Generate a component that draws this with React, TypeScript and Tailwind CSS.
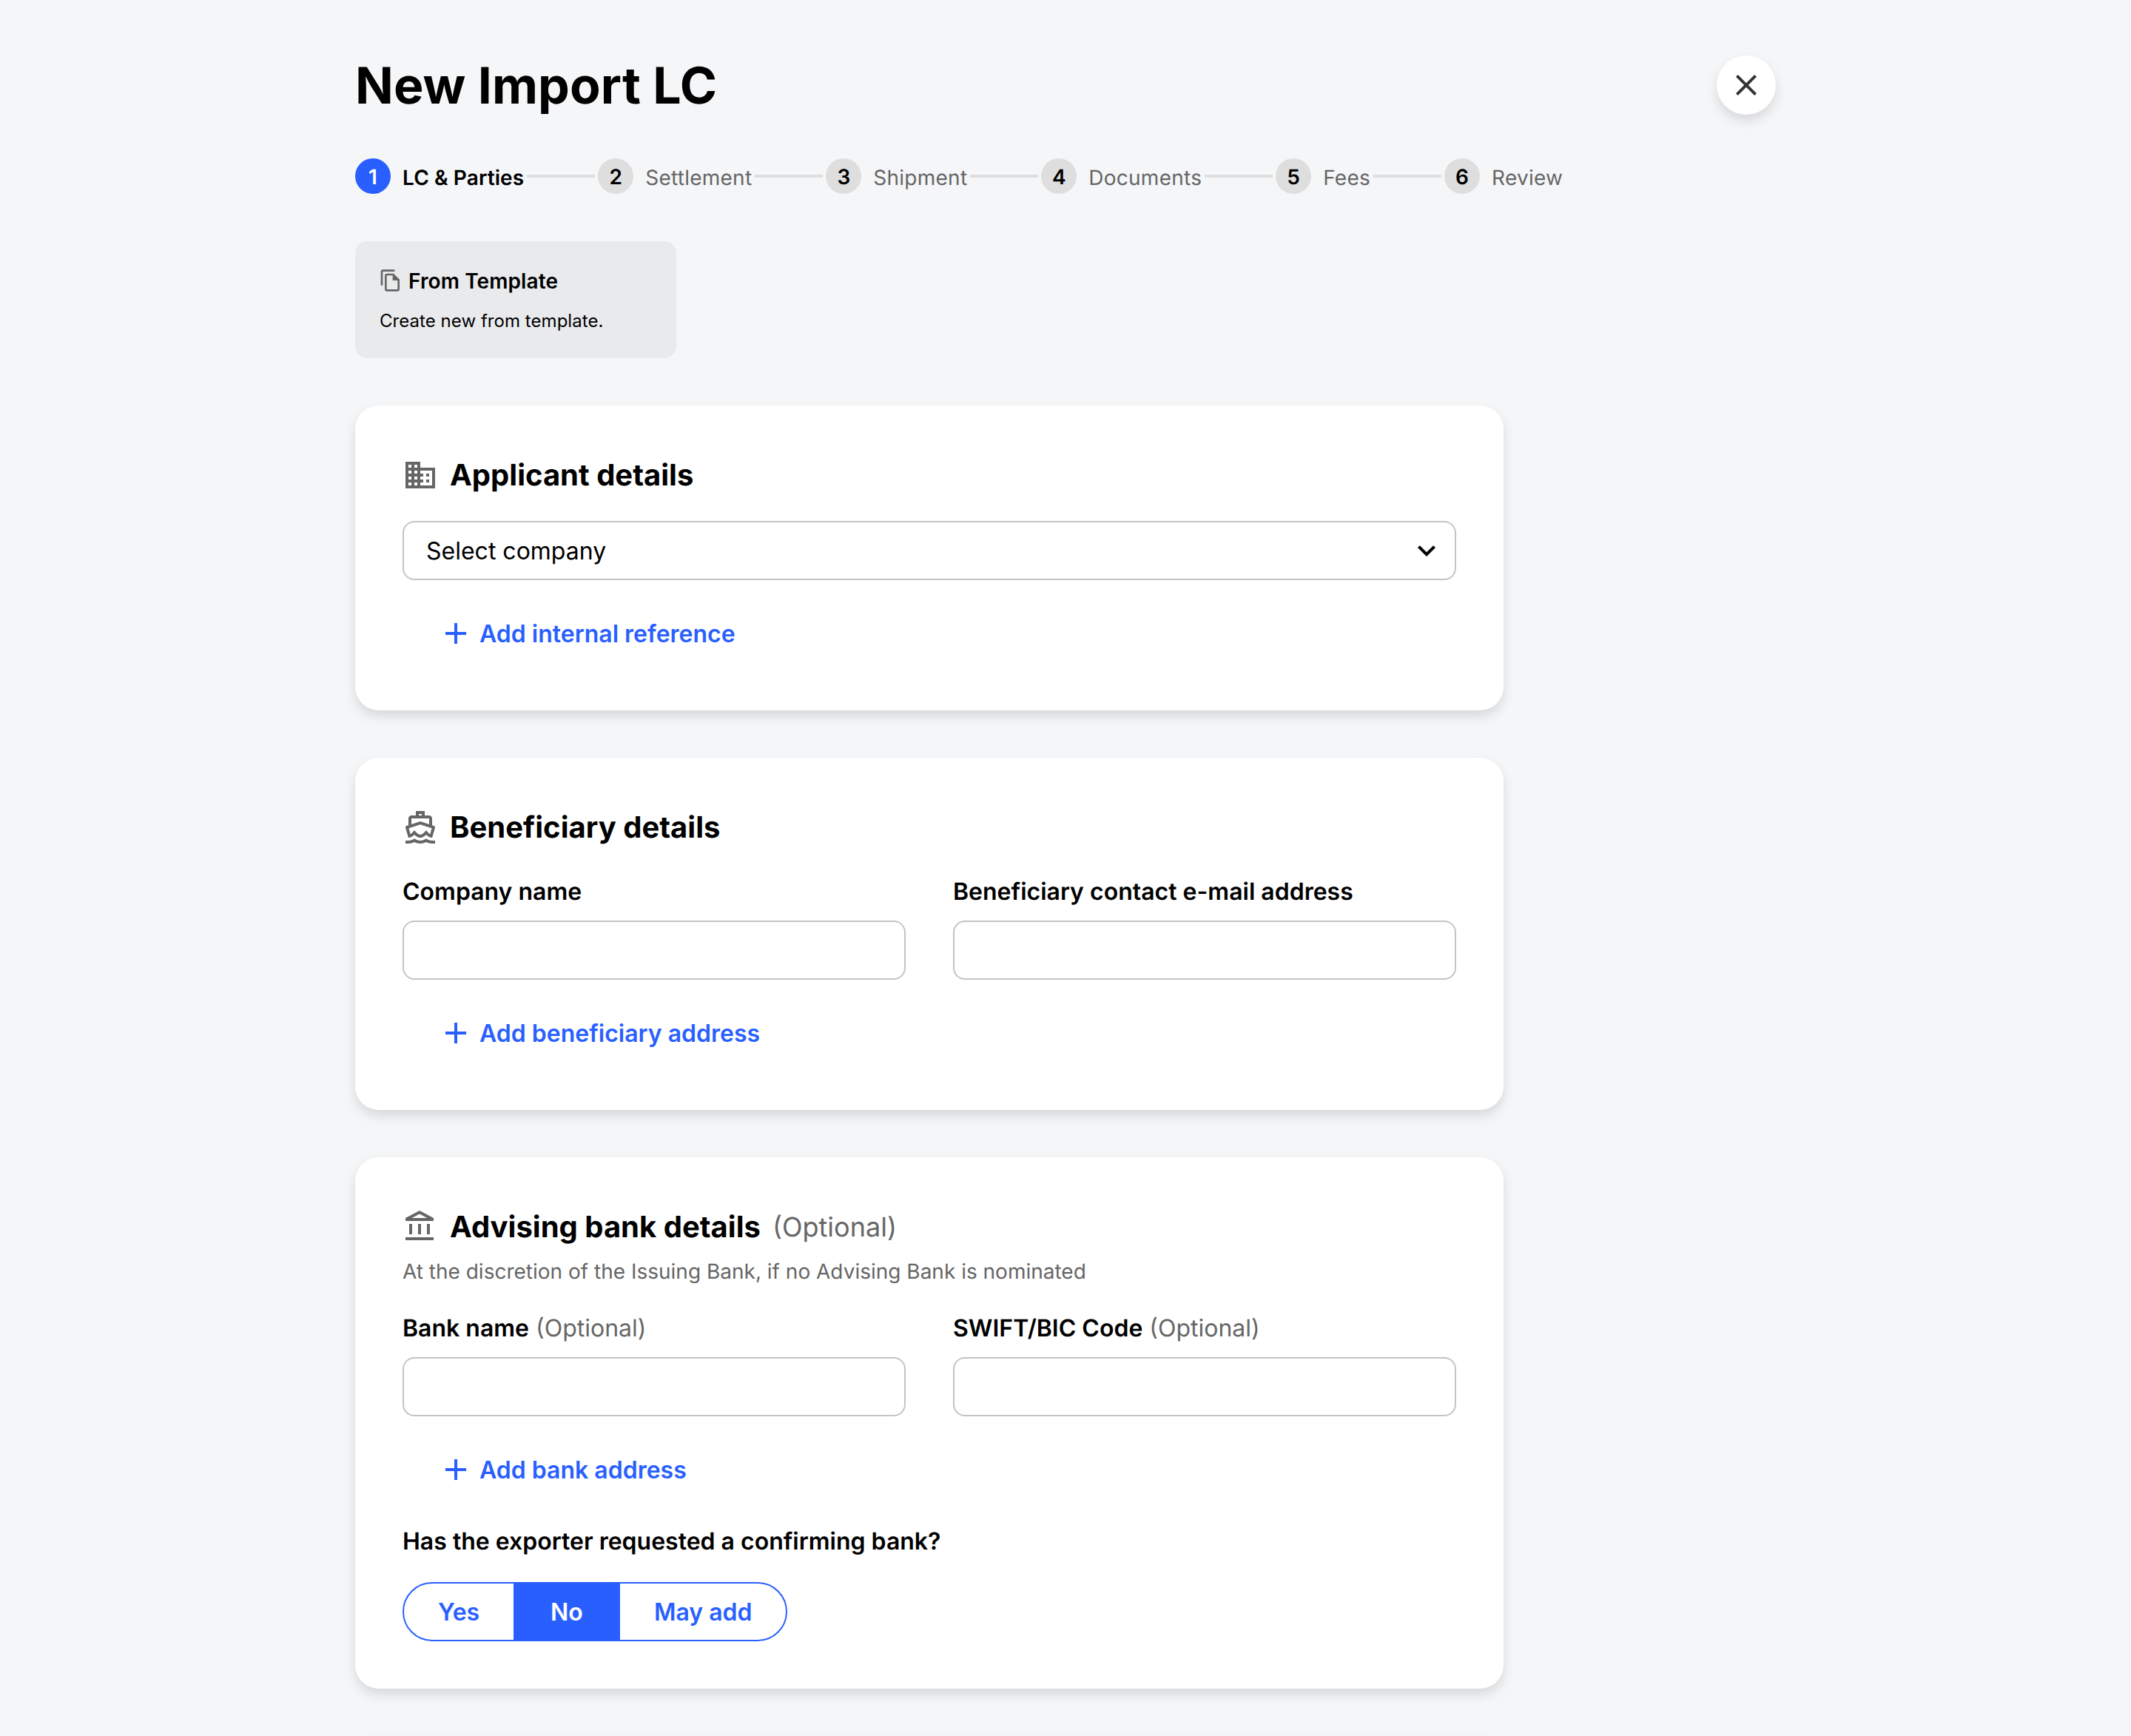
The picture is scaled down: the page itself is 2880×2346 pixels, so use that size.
import React, { useState } from "react";
import {
  MdAdd,
  MdClose,
  MdExpandMore,
  MdOutlineAccountBalance,
  MdOutlineBusiness,
  MdOutlineDirectionsBoat,
  MdOutlineFileCopy,
} from "react-icons/md";

const STEPS = ["LC & Parties", "Settlement", "Shipment", "Documents", "Fees", "Review"];
const CONFIRMING_OPTIONS = ["Yes", "No", "May add"];

interface CardProps {
  children?: React.ReactNode;
}

const Card: React.FC<CardProps> = ({ children }) => (
  <section className="w-[1552px] shrink-0 rounded-[32px] bg-white p-16 shadow-[0_8px_16px_rgba(0,0,0,0.12)]">
    {children}
  </section>
);

interface CardTitleProps {
  icon: React.ReactNode;
  title: string;
  optional?: boolean;
}

const CardTitle: React.FC<CardTitleProps> = ({ icon, title, optional }) => (
  <div className="flex h-[60px] items-center gap-4">
    <span className="text-5xl text-[#666666]">{icon}</span>
    <h2 className="text-[40px] font-bold leading-[60px]">{title}</h2>
    {optional && <span className="text-4xl text-[#666666]">(Optional)</span>}
  </div>
);

interface FieldProps {
  label: string;
  optional?: boolean;
}

const Field: React.FC<FieldProps> = ({ label, optional }) => (
  <label className="flex flex-1 flex-col gap-[15px]">
    <span className="pt-px text-[32px] font-semibold leading-[48px]">
      {label}
      {optional && <span className="font-normal text-[#666666]"> (Optional)</span>}
    </span>
    <input className="h-20 w-full rounded-2xl border-2 border-[#c4c4c4] bg-white px-8 text-[32px] outline-none" />
  </label>
);

const AddButton: React.FC<{ label: string }> = ({ label }) => (
  <button className="mt-8 flex h-20 items-center gap-2 px-12 text-[32px] font-semibold text-[#295fff]">
    <MdAdd className="size-12" />
    <span className="pt-0.5">{label}</span>
  </button>
);

const Stepper: React.FC<{ current: number }> = ({ current }) => (
  <ol className="mt-[59px] flex h-12 items-center text-[28px] leading-[42px]">
    {STEPS.map((step, index) => (
      <li key={step} className="flex items-center">
        <span
          className={`flex size-12 items-center justify-center rounded-full pt-0.5 font-semibold ${
            index === current ? "bg-[#295fff] text-white" : "bg-[#dedede] text-black"
          }`}
        >
          {index + 1}
        </span>
        <span
          className={`ml-4 pt-1 ${
            index === current
              ? "font-semibold tracking-[0.1px] text-black"
              : "tracking-[0.25px] text-[#666666]"
          }`}
        >
          {step}
        </span>
        {index < STEPS.length - 1 && <span className="mx-1 h-1 w-[92px] bg-[#dedede]" />}
      </li>
    ))}
  </ol>
);

const App: React.FC = () => {
  const [confirming, setConfirming] = useState("No");

  return (
    <main className="h-[2346px] w-[2880px] overflow-hidden bg-[#f5f6f8] px-[480px] pt-[75px] font-['Inter',sans-serif] text-black [text-rendering:geometricPrecision]">
      <header className="flex h-20 items-center justify-between">
        <h1 className="pt-0.5 text-[68px] font-bold leading-none tracking-[0.1px]">New Import LC</h1>
        <button
          aria-label="Close"
          className="flex size-20 items-center justify-center rounded-full bg-white text-[#333333] shadow-[0_8px_16px_rgba(0,0,0,0.12)]"
        >
          <MdClose className="size-12" />
        </button>
      </header>

      <Stepper current={0} />

      <button className="mt-16 flex h-[158px] w-[434px] flex-col gap-4 rounded-2xl bg-[#e9eaec] p-8 text-left">
        <span className="flex h-[42px] items-center gap-2 text-[28px] font-semibold leading-[42px]">
          <MdOutlineFileCopy className="size-8 text-[#666666]" />
          <span className="pt-0.5 tracking-[0.1px]">From Template</span>
        </span>
        <span className="pl-px text-2xl leading-9 tracking-[0.05px]">Create new from template.</span>
      </button>

      <div className="mt-16 flex flex-col gap-16">
        <Card>
          <CardTitle icon={<MdOutlineBusiness />} title="Applicant details" />
          <button className="mt-8 flex h-20 w-full items-center justify-between rounded-2xl border-2 border-[#c4c4c4] pl-[30px] pr-3.5 text-[32px]">
            <span className="pt-0.5">Select company</span>
            <MdExpandMore className="size-12" />
          </button>
          <AddButton label="Add internal reference" />
        </Card>

        <Card>
          <CardTitle icon={<MdOutlineDirectionsBoat />} title="Beneficiary details" />
          <div className="mt-8 flex gap-16">
            <Field label="Company name" />
            <Field label="Beneficiary contact e-mail address" />
          </div>
          <AddButton label="Add beneficiary address" />
        </Card>

        <Card>
          <CardTitle icon={<MdOutlineAccountBalance />} title="Advising bank details" optional />
          <p className="mt-[9px] text-[28px] leading-[42px] text-[#666666]">
            At the discretion of the Issuing Bank, if no Advising Bank is nominated
          </p>
          <div className="mt-[31px] flex gap-16">
            <Field label="Bank name" optional />
            <Field label="SWIFT/BIC Code" optional />
          </div>
          <AddButton label="Add bank address" />
          <p className="mt-[33px] text-[32px] font-semibold leading-[48px]">
            Has the exporter requested a confirming bank?
          </p>
          <div className="mt-[31px] flex h-20 w-[520px] overflow-hidden rounded-full border-2 border-[#295fff] text-[32px] font-semibold">
            {CONFIRMING_OPTIONS.map((option) => (
              <button
                key={option}
                onClick={() => setConfirming(option)}
                className={`min-w-36 whitespace-nowrap px-[46px] pt-0.5 ${
                  confirming === option ? "bg-[#295fff] text-white" : "text-[#295fff]"
                }`}
              >
                {option}
              </button>
            ))}
          </div>
        </Card>

        <Card />
      </div>
    </main>
  );
};

export default App;
